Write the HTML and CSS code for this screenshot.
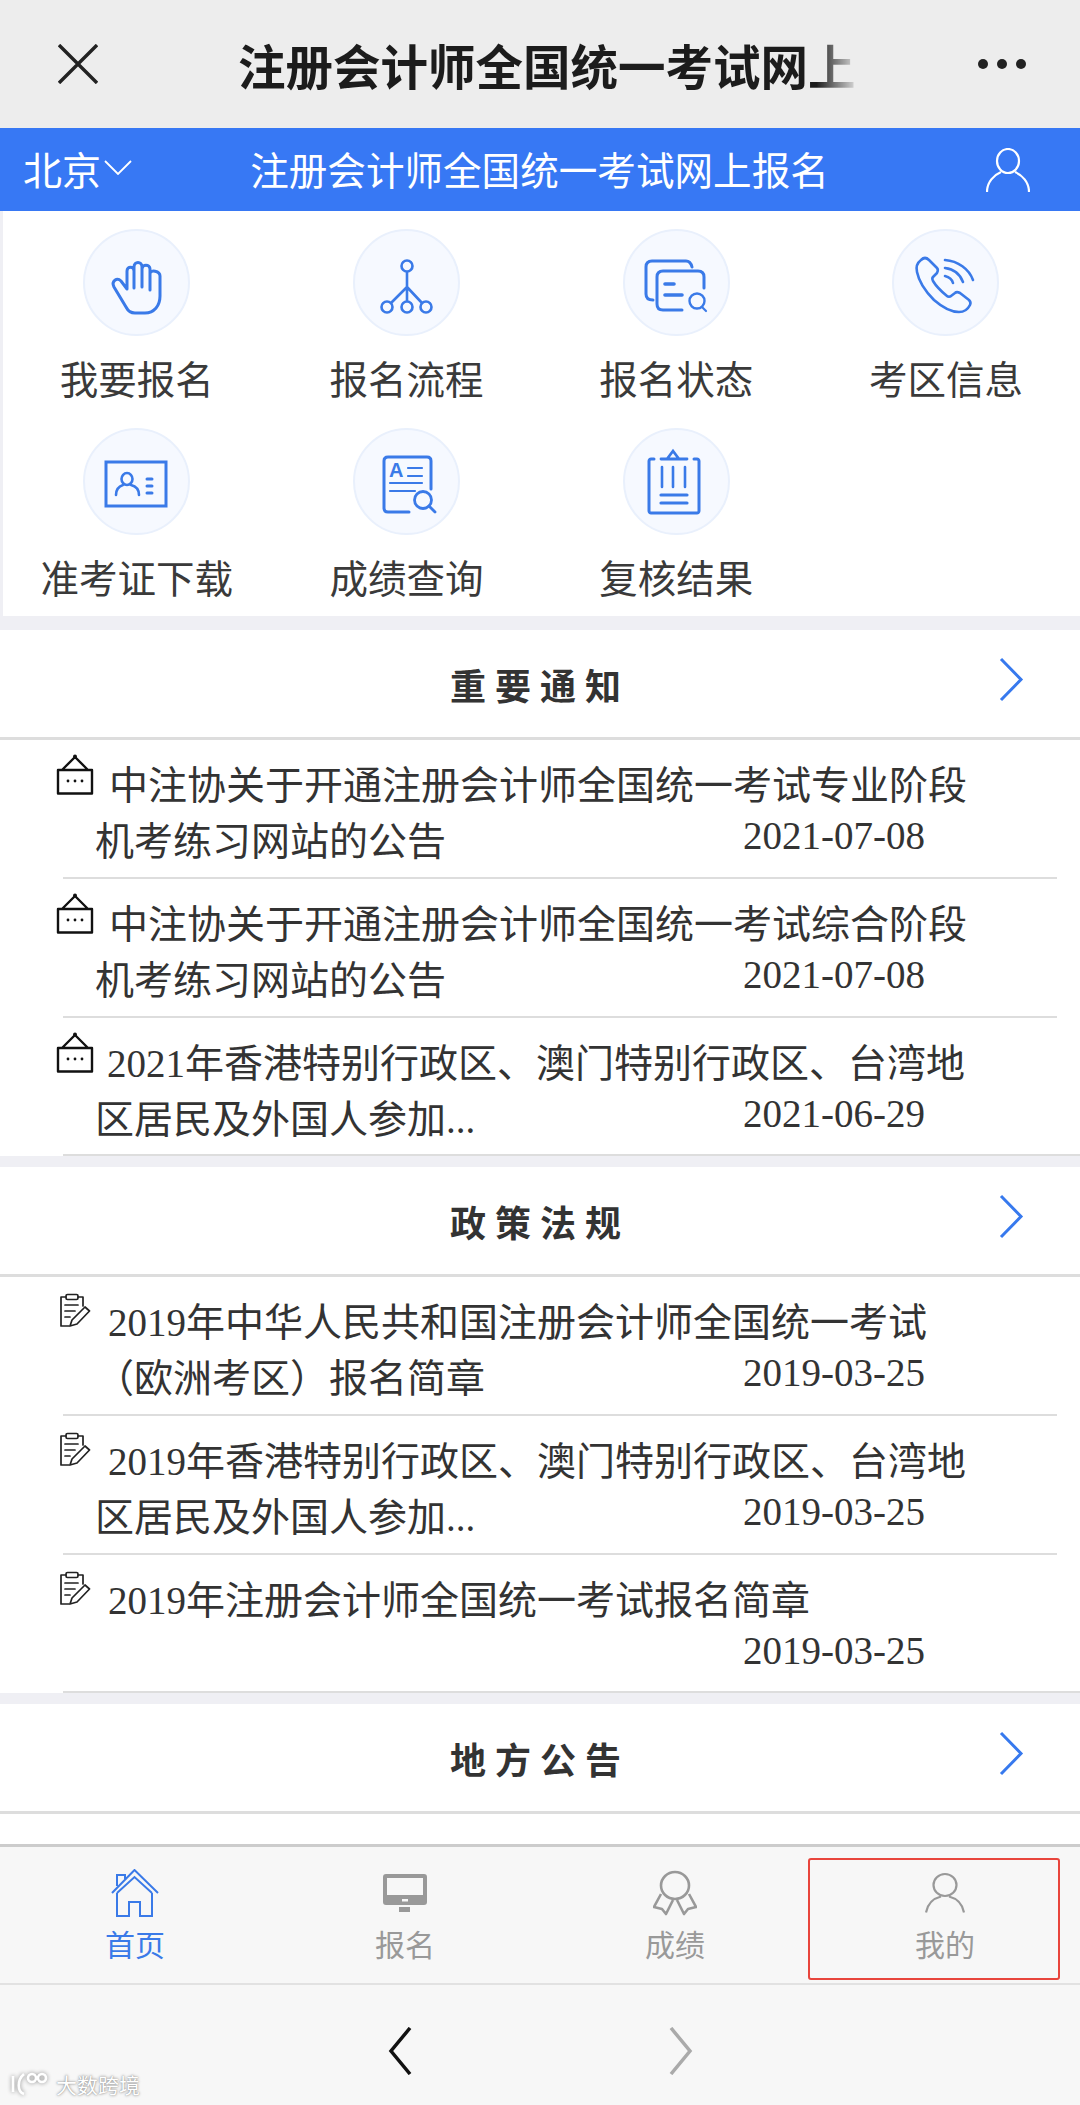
FILE: index.html
```html
<!DOCTYPE html>
<html lang="zh-CN">
    <head>
        <meta charset="UTF-8" />
        <meta name="viewport" content="width=device-width, initial-scale=1.0" />
        <title>注册会计师全国统一考试网上报名</title>
        <link rel="stylesheet" href="styles.css">
    </head>
    <body>
        <svg class="defs" width="0" height="0">
            <symbol id="sign" viewBox="0 0 38 42">
                <path d="M2 16H36V39.5H2ZM6 16 19 3 32 16" fill="none" stroke="#111" stroke-width="2.4" stroke-linejoin="round"/>
                <circle cx="19" cy="2.6" r="2" fill="#111"/>
                <circle cx="12" cy="27" r="1.4" fill="#111"/><circle cx="19" cy="27" r="1.4" fill="#111"/><circle cx="26" cy="27" r="1.4" fill="#111"/>
            </symbol>
            <symbol id="note" viewBox="0 0 32 34">
                <g fill="none" stroke="#222" stroke-width="1.7" stroke-linejoin="round" stroke-linecap="round">
                    <path d="M7 4H2V33H10M19 4H24V13"/>
                    <rect x="7" y="1.5" width="12" height="5" rx="1.5"/>
                    <path d="M6 12H19M6 18H16M6 24H11"/>
                    <path d="M11 33 13 27 26 14 30.500 18 18 31Z"/>
                </g>
            </symbol>
            <symbol id="more" viewBox="0 0 26 45">
                <path d="M3 2 23 22.500 3 43" fill="none" stroke="#3779ee" stroke-width="3"/>
            </symbol>
        </svg>

        <div class="topbar">
            <svg class="close" width="40" height="40" viewBox="0 0 40 40">
                <path d="M1 1 39 39M39 1 1 39" stroke="#222" stroke-width="3.400"/>
            </svg>
            <div class="pagetitle">注册会计师全国统一考试网上</div>
            <div class="dots"><span></span><span></span><span></span></div>
        </div>

        <div class="head">
            <div class="city">
                北京
                <svg width="28" height="15" viewBox="0 0 28 15">
                    <path d="M1 1 14 14 27 1" fill="none" stroke="#fff" stroke-width="1.800"/>
                </svg>
            </div>
            <div class="headtitle">注册会计师全国统一考试网上报名</div>
            <svg class="user" width="44" height="44" viewBox="0 0 44 44">
                <ellipse cx="22" cy="13" rx="11" ry="12" fill="none" stroke="#fff" stroke-width="2.200"/>
                <path d="M1 44C1 34 8 27 15 24M43 44C43 34 36 27 29 24" fill="none" stroke="#fff" stroke-width="2.200"/>
            </svg>
        </div>

        <div class="main">
            <div class="entry">
                <div class="grid">
                    <div class="cell">
                        <div class="circle">
                            <svg width="106" height="106" viewBox="0 0 106 106">
                                <path d="M43 59 37 51C33 47 27 51 30 57L42 77C44 81 47 83 51 83H61C70 83 76 76 76 66V46C76 41 66 39 66 44M43 59V41C43 36 50 36 50 41V58M50 41V37C50 31 58 31 58 37V57M58 39C58 34 66 34 66 39V60" fill="none" stroke="#3a7ae8" stroke-width="3" stroke-linecap="round"/>
                            </svg>
                        </div>
                        <div class="label">我要报名</div>
                    </div>
                    <div class="cell">
                        <div class="circle">
                            <svg width="106" height="106" viewBox="0 0 106 106">
                                <g fill="none" stroke="#3a7ae8" stroke-width="2.600">
                                    <circle cx="53" cy="36" r="5.500"/>
                                    <circle cx="33" cy="77" r="5.500"/>
                                    <circle cx="53" cy="77" r="5.500"/>
                                    <circle cx="72" cy="77" r="5.500"/>
                                    <path d="M53 41.500V71.500M53 57 37 73M53 57 68 73"/>
                                </g>
                            </svg>
                        </div>
                        <div class="label">报名流程</div>
                    </div>
                    <div class="cell">
                        <div class="circle">
                            <svg width="106" height="106" viewBox="0 0 106 106">
                                <g fill="none" stroke="#3a7ae8" stroke-width="3" stroke-linecap="round">
                                    <path d="M30 70C25 70 23 68 23 64V37C23 33 25 31 29 31H63C66 31 68 33 69 37"/>
                                    <path d="M59 80H40C36 80 34 78 34 74V47C34 43 36 41 40 41H75C79 41 81 43 81 47V58"/>
                                    <path d="M42 54H51M42 65H59" stroke-width="3.600"/>
                                    <circle cx="74" cy="71" r="7.500" stroke-width="2.400"/>
                                    <path d="M79 77 83 81" stroke-width="2.200"/>
                                </g>
                            </svg>
                        </div>
                        <div class="label">报名状态</div>
                    </div>
                    <div class="cell">
                        <div class="circle">
                            <svg width="106" height="106" viewBox="0 0 106 106">
                                <g fill="none" stroke="#3a7ae8" stroke-width="2.600" stroke-linecap="round" stroke-linejoin="round">
                                    <path d="M36 30C33 27 30 28 28 30 24 33 23 38 24 42 26 52 33 62 41 70 49 77 58 82 66 82 71 82 75 79 77 75 78 73 77 71 76 70L67 63C65 62 63 62 62 63L58 66C57 67 55 67 54 66 49 62 43 56 40 51 39 49 39 48 40 47L44 43C45 41 45 39 44 38Z"/>
                                    <path d="M52 30C65 31 76 39 80 50M52 38C60 39 67 44 70 52M52 46C56 47 59 49 60 53"/>
                                </g>
                            </svg>
                        </div>
                        <div class="label">考区信息</div>
                    </div>
                    <div class="cell">
                        <div class="circle">
                            <svg width="106" height="106" viewBox="0 0 106 106">
                                <g fill="none" stroke="#3a7ae8" stroke-linecap="round">
                                    <rect x="22" y="33" width="60" height="44" stroke-width="3" stroke-linecap="butt"/>
                                    <ellipse cx="43" cy="50" rx="5.500" ry="6" stroke-width="2.600"/>
                                    <path d="M32 66C32 60 36 57 39 56M55 66C55 60 51 57 47 56" stroke-width="2.600"/>
                                    <path d="M63 50H68M63 57H68M63 64H68" stroke-width="3"/>
                                </g>
                            </svg>
                        </div>
                        <div class="label">准考证下载</div>
                    </div>
                    <div class="cell">
                        <div class="circle">
                            <svg width="106" height="106" viewBox="0 0 106 106">
                                <g fill="none" stroke="#3a7ae8" stroke-linecap="round">
                                    <path d="M55 83H34C31 83 30 81 30 79V32C30 30 31 28 34 28H73C76 28 77 30 77 32V60" stroke-width="3"/>
                                    <path d="M54 39H68M54 47H68M36 54H68M36 62H61" stroke-width="2.200"/>
                                    <circle cx="69" cy="71" r="8.500" stroke-width="2.800"/>
                                    <path d="M75 77 81 83" stroke-width="2.800"/>
                                </g>
                                <text class="glyph" x="35" y="48">A</text>
                            </svg>
                        </div>
                        <div class="label">成绩查询</div>
                    </div>
                    <div class="cell">
                        <div class="circle">
                            <svg width="106" height="106" viewBox="0 0 106 106">
                                <g fill="none" stroke="#3a7ae8" stroke-linecap="round">
                                    <path d="M31 30H28C27 30 26 31 26 32V82C26 83 27 84 28 84H74C75 84 76 83 76 82V32C76 31 75 30 74 30H71" stroke-width="3"/>
                                    <path d="M38 30H64M44 30 50 22 56 30" stroke-width="2.800"/>
                                    <path d="M39 38V58M50 38V58M62 38V58" stroke-width="2.600"/>
                                    <path d="M38 66H64M38 74H64" stroke-width="3.200"/>
                                </g>
                            </svg>
                        </div>
                        <div class="label">复核结果</div>
                    </div>
                </div>
            </div>

            <div class="section">
                <div class="stitle">
                    <span>重要通知</span>
                    <svg class="more" width="26" height="45"><use href="#more"/></svg>
                </div>
                <div class="item">
                    <div class="ititle"><svg class="sign" width="38" height="42"><use href="#sign"/></svg>中注协关于开通注册会计师全国统一考试专业阶段<br>机考练习网站的公告</div>
                    <div class="date">2021-07-08</div>
                </div>
                <div class="item">
                    <div class="ititle"><svg class="sign" width="38" height="42"><use href="#sign"/></svg>中注协关于开通注册会计师全国统一考试综合阶段<br>机考练习网站的公告</div>
                    <div class="date">2021-07-08</div>
                </div>
                <div class="item">
                    <div class="ititle"><svg class="sign signy" width="38" height="42"><use href="#sign"/></svg>2021年香港特别行政区、澳门特别行政区、台湾地<br>区居民及外国人参加...</div>
                    <div class="date">2021-06-29</div>
                </div>
            </div>

            <div class="section">
                <div class="stitle">
                    <span>政策法规</span>
                    <svg class="more" width="26" height="45"><use href="#more"/></svg>
                </div>
                <div class="item">
                    <div class="ititle"><svg class="note" width="32" height="34"><use href="#note"/></svg>2019年中华人民共和国注册会计师全国统一考试<br>（欧洲考区）报名简章</div>
                    <div class="date">2019-03-25</div>
                </div>
                <div class="item">
                    <div class="ititle"><svg class="note" width="32" height="34"><use href="#note"/></svg>2019年香港特别行政区、澳门特别行政区、台湾地<br>区居民及外国人参加...</div>
                    <div class="date">2019-03-25</div>
                </div>
                <div class="item">
                    <div class="ititle"><svg class="note" width="32" height="34"><use href="#note"/></svg>2019年注册会计师全国统一考试报名简章<br>&nbsp;</div>
                    <div class="date">2019-03-25</div>
                </div>
            </div>

            <div class="section">
                <div class="stitle">
                    <span>地方公告</span>
                    <svg class="more" width="26" height="45"><use href="#more"/></svg>
                </div>
            </div>
        </div>

        <div class="tabs">
            <div class="tab active">
                <svg width="48" height="48" viewBox="0 0 48 48">
                    <path d="M1 24 23.500 1 47 24M6 24 23.500 8 41 24M6 24V47H18V33H29V47H41V24M6 17V6H14V10" fill="none" stroke="#3a7ae8" stroke-width="2"/>
                </svg>
                <div>首页</div>
            </div>
            <div class="tab">
                <svg width="44" height="38" viewBox="0 0 44 38">
                    <path d="M3 0H41C43 0 44 1 44 3V28C44 30 43 31 41 31H3C1 31 0 30 0 28V3C0 1 1 0 3 0ZM4 4V21H40V4Z" fill="#999" fill-rule="evenodd"/>
                    <rect x="19" y="25" width="6" height="2.500" fill="#f7f7f7"/>
                    <rect x="16" y="33" width="11" height="5" fill="#999"/>
                </svg>
                <div>报名</div>
            </div>
            <div class="tab">
                <svg width="44" height="44" viewBox="0 0 44 44">
                    <g fill="none" stroke="#999" stroke-width="2.600" stroke-linejoin="round">
                        <ellipse cx="22" cy="14.500" rx="14" ry="13.500"/>
                        <path d="M8 23 1 36 9 38 13 43 20 29M36 23 43 36 35 38 31 43 24 29"/>
                    </g>
                </svg>
                <div>成绩</div>
            </div>
            <div class="tab">
                <svg width="40" height="40" viewBox="0 0 40 40">
                    <ellipse cx="20" cy="12" rx="11.500" ry="11" fill="none" stroke="#999" stroke-width="2.200"/>
                    <path d="M1 39.500C3 29 10 25 16 23.500M39 39.500C37 29 30 25 24 23.500" fill="none" stroke="#999" stroke-width="2.200"/>
                </svg>
                <div>我的</div>
                <div class="mark"></div>
            </div>
        </div>

        <div class="nav">
            <svg width="24" height="48" viewBox="0 0 24 48">
                <path d="M22 1 3 24 22 47" fill="none" stroke="#111" stroke-width="3.500"/>
            </svg>
            <svg width="24" height="48" viewBox="0 0 24 48">
                <path d="M2 1 21 24 2 47" fill="none" stroke="#aaa" stroke-width="3.500"/>
            </svg>
            <div class="wm">
                <svg width="40" height="24" viewBox="0 0 40 24">
                    <g fill="none" stroke="#fff" stroke-width="2.600">
                        <path d="M3 4V20M14 2C7 8 7 20 14 22"/>
                        <circle cx="22" cy="6" r="4"/>
                        <circle cx="32" cy="6" r="4"/>
                    </g>
                </svg>
                大数跨境
            </div>
        </div>
    </body>
</html>
```

FILE: styles.css
```css
* {
    box-sizing: border-box;
}

html,
body {
    margin: 0;
    padding: 0;
}

body {
    width: 1080px;
    height: 2105px;
    display: flex;
    flex-direction: column;
    overflow: hidden;
    background: #fff;
    color: #333;
    font-family: "Liberation Serif", "Noto Sans CJK SC", serif;
}

.defs {
    position: absolute;
}

.topbar {
    height: 128px;
    flex: none;
    background: #ededed;
    display: flex;
    align-items: center;
    padding-left: 58px;
}

.pagetitle {
    width: 622px;
    margin-left: 140px;
    overflow: hidden;
    white-space: nowrap;
    font-family: "Noto Sans CJK SC", sans-serif;
    font-size: 47.500px;
    font-weight: 700;
    color: #1c1c1c;
    -webkit-mask-image: linear-gradient(to right, #000 93%, transparent 100%);
    mask-image: linear-gradient(to right, #000 93%, transparent 100%);
}

.dots {
    margin-left: 118px;
    display: flex;
    gap: 9px;
}

.dots span {
    width: 10px;
    height: 10px;
    border-radius: 999px;
    background: #222;
}

.head {
    height: 83px;
    flex: none;
    background: #3778f4;
    color: #fff;
    display: grid;
    grid-template-columns: 1fr auto 1fr;
    align-items: center;
    font-family: "Noto Sans CJK SC", sans-serif;
    padding: 0 50px 0 23px;
}

.city {
    font-size: 39px;
    display: flex;
    align-items: center;
    gap: 3px;
    margin-top: -4px;
}

.headtitle {
    font-size: 38.600px;
    white-space: nowrap;
    margin-top: -4px;
    position: relative;
    left: 13px;
}

.user {
    justify-self: end;
}

.main {
    flex: 1;
    min-height: 0;
    overflow: hidden;
    background: #efeff4;
    display: flex;
    flex-direction: column;
}

.entry {
    flex: none;
    height: 405px;
    margin-bottom: 14px;
    padding: 18px 0 11px;
    background: #fff;
    border-left: 3px solid #efeff4;
}

.grid {
    margin-left: -1px;
    display: grid;
    grid-template-columns: repeat(4, 269.700px);
    row-gap: 25px;
}

.cell {
    display: flex;
    flex-direction: column;
    align-items: center;
}

.circle {
    width: 107px;
    height: 107px;
    border-radius: 50%;
    background: #f6f9ff;
    border: 2px solid #e9f0fc;
    display: flex;
    justify-content: center;
    align-items: center;
}

.circle svg {
    flex: none;
}

.glyph {
    font-family: "Liberation Sans", sans-serif;
    font-size: 20px;
    font-weight: 700;
    fill: #3a7ae8;
}

.label {
    margin-top: 15px;
    height: 52px;
    line-height: 52px;
    font-family: "Noto Sans CJK SC", sans-serif;
    font-size: 38.500px;
    white-space: nowrap;
    color: #3a3a3a;
}

.section {
    flex: none;
    background: #fff;
    margin-bottom: 11px;
}

.section:last-child {
    flex: 1;
    margin-bottom: 0;
}

.stitle {
    height: 110px;
    border-bottom: 3px solid #ddd;
    display: flex;
    justify-content: center;
    align-items: center;
    position: relative;
    font-family: "Noto Sans CJK SC", sans-serif;
    font-size: 36px;
    font-weight: 700;
    letter-spacing: 9px;
    color: #333;
}

.more {
    position: absolute;
    right: 56px;
    top: 27px;
}

.item {
    margin-left: 63px;
    margin-right: 23px;
    height: 139px;
    padding: 18px 131px 8px 32px;
    border-bottom: 2px solid #ddd;
    display: grid;
    grid-template-columns: minmax(0, 1fr);
    font-size: 39px;
    line-height: 56px;
    white-space: nowrap;
}

.item:last-child {
    margin-right: 0;
    padding-right: 154px;
    height: 138px;
}

.ititle,
.date {
    grid-area: 1 / 1;
}

.date {
    justify-self: end;
    align-self: end;
    margin-bottom: 6px;
    margin-right: 1px;
}

.sign {
    margin: -14px 15px 0 -39px;
    vertical-align: 3px;
}

.signy {
    margin-right: 13px;
}

.note {
    margin: -10px 17px 0 -36px;
    vertical-align: 9px;
}

.tabs {
    height: 141px;
    flex: none;
    background: #f7f7f7;
    border-top: 3px solid #ccc;
    border-bottom: 2px solid #e2e2e2;
    display: grid;
    grid-template-columns: repeat(4, 270px);
    font-family: "Noto Sans CJK SC", sans-serif;
    font-size: 30px;
    color: #999;
}

.tab {
    position: relative;
    height: 136px;
    padding-top: 22px;
    display: flex;
    flex-direction: column;
    align-items: center;
}

.tab svg {
    height: 48px;
    flex: none;
}

.tab div {
    line-height: 44px;
    margin-top: 4px;
}

.tab.active {
    color: #3a7ae8;
}

.tab .mark {
    position: absolute;
    left: -2px;
    right: 20px;
    top: 11px;
    height: 122px;
    margin: 0;
    border: 2px solid #e8453c;
    border-radius: 3px;
}

.nav {
    height: 120px;
    flex: none;
    position: relative;
    background: #f7f7f7;
    padding-top: 12px;
    display: flex;
    justify-content: center;
    align-items: center;
    gap: 257px;
}

.wm {
    position: absolute;
    left: 10px;
    bottom: 6px;
    display: flex;
    align-items: center;
    gap: 6px;
    font-family: "Noto Sans CJK SC", sans-serif;
    font-size: 21px;
    color: #fff;
    text-shadow: 0 0 3px #888, 0 0 1px #999;
}

.wm svg {
    filter: drop-shadow(0 0 2px #888);
}
```
